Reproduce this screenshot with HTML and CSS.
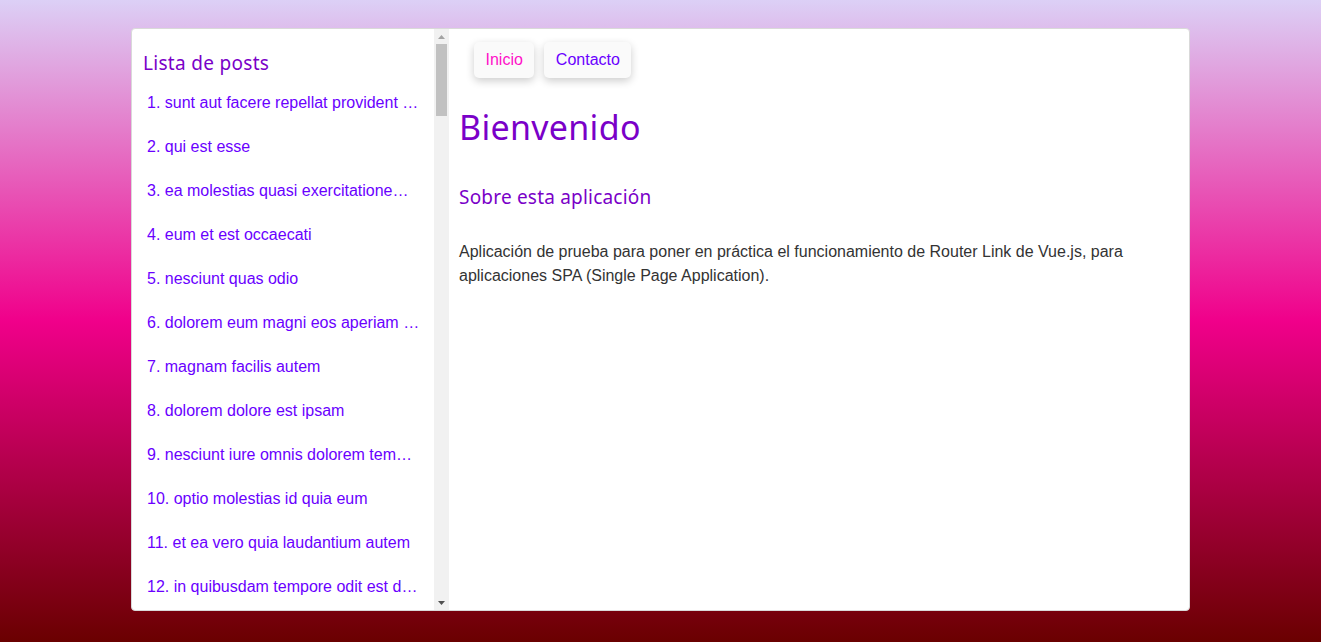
FILE: index.html
```html
<!DOCTYPE html>
<html lang="es">
<head>
<meta charset="utf-8">
<title>Router Link</title>
<link rel="stylesheet" href="styles.css">
</head>
<body>
<div class="app">
  <aside class="sidebar">
    <div class="sidebar-scroll">
      <h2 class="sidebar-title">Lista de posts</h2>
      <ul class="post-list">
        <li><a href="#">1. sunt aut facere repellat provident occaecati excepturi optio reprehenderit</a></li>
        <li><a href="#">2. qui est esse</a></li>
        <li><a href="#">3. ea molestias quasi exercitationem repellat qui ipsa sit aut</a></li>
        <li><a href="#">4. eum et est occaecati</a></li>
        <li><a href="#">5. nesciunt quas odio</a></li>
        <li><a href="#">6. dolorem eum magni eos aperiam quia</a></li>
        <li><a href="#">7. magnam facilis autem</a></li>
        <li><a href="#">8. dolorem dolore est ipsam</a></li>
        <li><a href="#">9. nesciunt iure omnis dolorem tempora et accusantium</a></li>
        <li><a href="#">10. optio molestias id quia eum</a></li>
        <li><a href="#">11. et ea vero quia laudantium autem</a></li>
        <li><a href="#">12. in quibusdam tempore odit est dolorem</a></li>
        <li><a href="#">13. dolorum ut in voluptas mollitia et saepe quo animi</a></li>
        <li><a href="#">14. voluptatem eligendi optio</a></li>
        <li><a href="#">15. eveniet quod temporibus</a></li>
        <li><a href="#">16. sint suscipit perspiciatis velit dolorum rerum ipsa laboriosam odio</a></li>
        <li><a href="#">17. fugit voluptas sed molestias voluptatem provident</a></li>
        <li><a href="#">18. voluptate et itaque vero tempora molestiae</a></li>
        <li><a href="#">19. adipisci placeat illum aut reiciendis qui</a></li>
        <li><a href="#">20. doloribus ad provident suscipit at</a></li>
      </ul>
    </div>
    <div class="scrollbar" aria-hidden="true">
      <div class="scroll-btn">
        <svg width="7" height="4" viewBox="0 0 7 4"><path d="M0 4 L3.5 0 L7 4 Z" fill="#a3a3a3"/></svg>
      </div>
      <div class="scroll-track">
        <div class="scroll-thumb"></div>
      </div>
      <div class="scroll-btn">
        <svg width="7" height="4" viewBox="0 0 7 4"><path d="M0 0 L7 0 L3.5 4 Z" fill="#505050"/></svg>
      </div>
    </div>
  </aside>
  <main class="content">
    <nav class="nav">
      <a href="#" class="nav-link active">Inicio</a>
      <a href="#" class="nav-link">Contacto</a>
    </nav>
    <h1 class="title">Bienvenido</h1>
    <h2 class="subtitle">Sobre esta aplicación</h2>
    <p class="text">Aplicación de prueba para poner en práctica el funcionamiento de Router Link de Vue.js, para aplicaciones SPA (Single Page Application).</p>
  </main>
</div>
</body>
</html>
```
FILE: styles.css
```css
* { box-sizing: border-box; }

html, body { height: 100%; }

body {
  margin: 0;
  padding: 28px 0 31px;
  font-family: "Liberation Sans", Arial, sans-serif;
  font-size: 16px;
  color: #333;
  background: linear-gradient(to bottom, #dcd0f6 0%, #f0008a 50%, #6a0000 100%);
}

.app {
  width: 1059px;
  height: 583px;
  margin: 0 auto;
  display: flex;
  background: #fff;
  border: 1px solid #d9d9d9;
  border-radius: 4px;
  overflow: hidden;
}

.sidebar {
  width: 317px;
  flex: none;
  display: flex;
  height: 100%;
}

.sidebar-scroll {
  flex: 1;
  min-width: 0;
  overflow: hidden;
  padding-top: 12px;
}

.scrollbar {
  width: 15px;
  flex: none;
  display: flex;
  flex-direction: column;
  background: #f1f1f1;
}

.scroll-btn {
  height: 15px;
  flex: none;
  display: flex;
  align-items: center;
  justify-content: center;
}

.scroll-btn svg { display: block; }

.scroll-track {
  flex: 1;
}

.scroll-thumb {
  height: 72px;
  margin: 0 2px;
  background: #c1c1c1;
}

.sidebar-title {
  margin: 10px 0 6px 11px;
  font-family: "Noto Sans", sans-serif;
  font-weight: 400;
  font-size: 19px;
  line-height: 24px;
  color: #7a00c8;
  letter-spacing: 0.3px;
}

.post-list {
  list-style: none;
  margin: 0;
  padding: 0;
}

.post-list li {
  padding: 10px 14px 10px 15px;
  line-height: 24px;
  white-space: nowrap;
  overflow: hidden;
  text-overflow: ellipsis;
  color: #6a00ff;
}

.post-list a {
  color: #6a00ff;
  text-decoration: none;
}

.content {
  flex: 1;
  padding: 13px 10px 10px;
}

.nav {
  display: flex;
  gap: 10px;
  padding-left: 15px;
}

.nav-link {
  display: block;
  padding: 8px 11.5px;
  line-height: 20px;
  background: #fafafa;
  border-radius: 5px;
  box-shadow: 0 3px 8px rgba(0, 0, 0, 0.2);
  color: #6a00ff;
  text-decoration: none;
}

.nav-link.active {
  color: #ff10c8;
}

.title {
  margin: 29px 0 0;
  font-family: "Noto Sans", sans-serif;
  font-weight: 400;
  font-size: 34px;
  line-height: 40px;
  letter-spacing: 0.3px;
  color: #7a00c8;
}

.subtitle {
  margin: 38px 0 0;
  font-family: "Noto Sans", sans-serif;
  font-weight: 400;
  font-size: 19px;
  line-height: 24px;
  letter-spacing: 0.2px;
  color: #7a00c8;
}

.text {
  margin: 31px 0 0;
  line-height: 24px;
  color: #333;
}
```
